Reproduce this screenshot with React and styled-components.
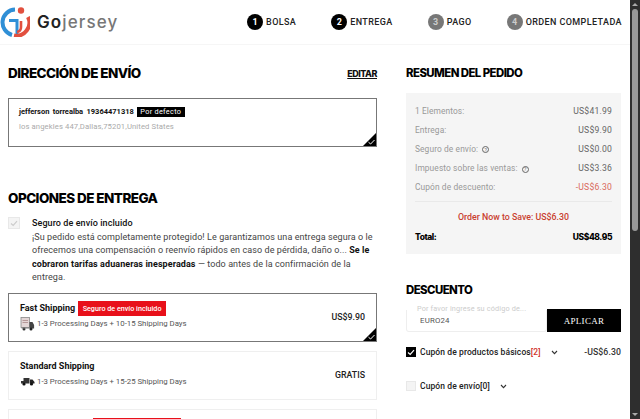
import React from "react";
import styled, { createGlobalStyle } from "styled-components";

const GlobalStyle = createGlobalStyle`
  html, body {
    margin: 0;
    padding: 0;
    height: 100%;
    overflow: hidden;
    background: #fff;
  }
  * { box-sizing: border-box; }
  body {
    font-family: "Roboto", "Liberation Sans", sans-serif;
    color: #111;
  }
`;

const Page = styled.div`
  display: flex;
  width: 640px;
  height: 419px;
  overflow: hidden;
`;

const Content = styled.div`
  flex: 1;
  min-width: 0;
  height: 419px;
  overflow: hidden;
`;

const ScrollTrack = styled.div`
  width: 10px;
  height: 419px;
  background: #2e2e2e;
  display: flex;
  flex-direction: column;
  align-items: center;
  justify-content: space-between;
  padding: 3px 0;
`;

const ScrollArrow = styled.div`
  width: 0;
  height: 0;
  border-left: 3px solid transparent;
  border-right: 3px solid transparent;
  ${({ $down }) => ($down ? "border-top: 3px solid #aaa;" : "border-bottom: 3px solid #aaa;")}
`;

const ScrollThumb = styled.div`
  width: 6px;
  height: 222px;
  margin-top: 3px;
  border-radius: 3px;
  background: #999;
`;

const ScrollTop = styled.div`
  display: flex;
  flex-direction: column;
  align-items: center;
`;

const Header = styled.header`
  height: 45px;
  display: flex;
  align-items: center;
  justify-content: space-between;
  padding-right: 8px;
  border-bottom: 1px solid #f6f6f6;
`;

const Logo = styled.div`
  display: flex;
  align-items: center;
  gap: 7px;
`;

const LogoText = styled.span`
  font-family: "Inter", sans-serif;
  font-size: 17px;
  font-weight: 500;
  letter-spacing: 1.1px;
  color: #777;
  b {
    font-weight: 600;
    color: #222;
  }
`;

const Steps = styled.div`
  display: flex;
  align-items: center;
  gap: 35px;
`;

const Step = styled.div`
  display: flex;
  align-items: center;
  gap: 3px;
  font-size: 9px;
  font-weight: 500;
  letter-spacing: 0.4px;
  color: #222;
`;

const StepDot = styled.span`
  width: 16px;
  height: 16px;
  border-radius: 50%;
  background: ${({ $off }) => ($off ? "#777" : "#000")};
  color: ${({ $off }) => ($off ? "#ccc" : "#fff")};
  display: flex;
  align-items: center;
  justify-content: center;
  font-size: 9px;
  font-weight: 700;
  letter-spacing: 0;
`;

const Columns = styled.div`
  display: flex;
  align-items: flex-start;
  gap: 29px;
  padding: 0 9px 0 8px;
`;

const LeftCol = styled.main`
  width: 369px;
  flex-shrink: 0;
`;

const RightCol = styled.aside`
  width: 215px;
  flex-shrink: 0;
`;

const HeadRow = styled.div`
  display: flex;
  align-items: center;
  justify-content: space-between;
  height: 18px;
  margin-top: ${({ $top }) => $top}px;
`;

const Heading = styled.h2`
  margin: 0;
  font-family: "Inter", sans-serif;
  font-size: ${({ $small }) => ($small ? 11.4 : 13.5)}px;
  font-weight: 800;
  letter-spacing: -0.55px;
  line-height: 18px;
  color: #000;
`;

const EditLink = styled.a`
  font-family: "Inter", sans-serif;
  font-size: 9px;
  font-weight: 800;
  letter-spacing: -0.5px;
  color: #111;
  text-decoration: underline;
`;

const Card = styled.div`
  position: relative;
  height: 49px;
  border: 1px solid ${({ $active }) => ($active ? "#777" : "#efefef")};
  overflow: hidden;
`;

const AddressCard = styled(Card)`
  margin-top: 16px;
  padding: 6px 10px;
`;

const Corner = styled.span`
  position: absolute;
  right: 0;
  bottom: 0;
  width: 0;
  height: 0;
  border-left: 13px solid transparent;
  border-bottom: 13px solid #000;
`;

const CornerCheck = styled.svg`
  position: absolute;
  right: 1px;
  bottom: 1px;
  width: 7px;
  height: 6px;
`;

const NameRow = styled.div`
  display: flex;
  align-items: center;
  gap: 3px;
  font-size: 7.5px;
  font-weight: 700;
  word-spacing: 1.5px;
  height: 13px;
`;

const DefaultTag = styled.span`
  background: #000;
  color: #fff;
  font-size: 7.3px;
  font-weight: 400;
  letter-spacing: 0.3px;
  padding: 0 3.5px;
  line-height: 10px;
  word-spacing: 0;
`;

const AddressLine = styled.div`
  margin-top: 4px;
  font-size: 7.7px;
  letter-spacing: 0.1px;
  color: #aaa;
`;

const Insurance = styled.div`
  display: flex;
  gap: 12px;
  margin-top: 10px;
`;

const Box = styled.span`
  flex-shrink: 0;
  width: ${({ $size }) => $size || 10}px;
  height: ${({ $size }) => $size || 10}px;
  display: flex;
  align-items: center;
  justify-content: center;
  border: 1px solid ${({ $on }) => ($on ? "#000" : "#e8e8e8")};
  background: ${({ $on }) => ($on ? "#000" : "#f4f4f4")};
`;

const InsuranceBody = styled.div`
  font-size: 9px;
  line-height: 13.5px;
  color: #444;
  letter-spacing: 0.08px;
  b {
    color: #111;
    font-weight: 700;
  }
`;

const InsuranceTitle = styled.div`
  color: #111;
  font-weight: 500;
`;

const ShipList = styled.div`
  display: flex;
  flex-direction: column;
  gap: 9px;
  margin-top: 8px;
`;

const ShipCard = styled(Card)`
  display: flex;
  align-items: center;
  justify-content: space-between;
  padding: 0 11px;
`;

const ShipMain = styled.div`
  align-self: flex-start;
  padding-top: 7px;
`;

const ShipTitle = styled.div`
  display: flex;
  align-items: center;
  gap: 3px;
  height: 14px;
  font-size: 9px;
  font-weight: 700;
  color: #111;
`;

const RedTag = styled.span`
  margin-top: 2px;
  background: #e8101a;
  color: #fff;
  font-size: 7.2px;
  font-weight: 500;
  line-height: 15px;
  padding: 0 4.5px;
`;

const BlankTag = styled.span`
  display: block;
  width: 88px;
  height: 14px;
  margin: 1px 0 0 73px;
  background: #e8101a;
`;

const ShipInfo = styled.div`
  display: flex;
  align-items: center;
  gap: 2px;
  height: 14px;
  margin-top: 2px;
  font-size: 7.8px;
  color: #555;
`;

const ShipPrice = styled.div`
  font-size: 8.8px;
  font-weight: 500;
  color: #222;
`;

const Summary = styled.div`
  margin-top: 11px;
  height: 161px;
  padding: 8px 9px 0 9px;
  background: #f5f5f5;
`;

const SummaryRow = styled.div`
  display: flex;
  align-items: center;
  justify-content: space-between;
  height: 19.2px;
  font-size: 8.4px;
  letter-spacing: 0.1px;
  color: #999;
`;

const RowValue = styled.span`
  font-size: 8.6px;
  letter-spacing: 0.2px;
  color: ${({ $red }) => ($red ? "#d9695c" : "#666")};
`;

const HelpIcon = styled.span`
  display: inline-flex;
  align-items: center;
  justify-content: center;
  width: 7px;
  height: 7px;
  margin-left: 4px;
  border: 1px solid #666;
  border-radius: 50%;
  font-size: 5px;
  color: #666;
`;

const Divider = styled.div`
  height: 1px;
  margin-top: 4px;
  background: #e9e9e9;
`;

const SaveNote = styled.div`
  margin-top: 10px;
  text-align: center;
  font-size: 8.8px;
  font-weight: 500;
  color: #c9402f;
`;

const TotalRow = styled.div`
  display: flex;
  justify-content: space-between;
  margin-top: 10px;
  font-family: "Inter", sans-serif;
  font-size: 8.5px;
  font-weight: 800;
  letter-spacing: -0.45px;
  color: #000;
`;

const CouponForm = styled.div`
  display: flex;
  margin-top: 10px;
`;

const CouponField = styled.div`
  position: relative;
  flex: 1;
  height: 22px;
  margin-top: 1px;
  padding: 0 13px;
  display: flex;
  align-items: center;
  font-size: 7.8px;
  letter-spacing: 0.2px;
  color: #555;
  border: 1px solid #eee;
  border-top: none;
  border-radius: 0 0 3px 3px;
`;

const CouponLegend = styled.span`
  position: absolute;
  top: -6px;
  left: 10px;
  font-size: 7.3px;
  letter-spacing: 0.15px;
  color: #ccc;
  white-space: nowrap;
`;

const ApplyButton = styled.button`
  width: 74px;
  height: 23px;
  border: none;
  padding: 0;
  background: #000;
  color: #fff;
  font-family: "Liberation Serif", serif;
  font-size: 9px;
  letter-spacing: 0.3px;
`;

const CouponRow = styled.div`
  display: flex;
  align-items: center;
  height: 14px;
  margin-top: ${({ $top }) => $top}px;
  font-size: 8.5px;
  font-weight: 500;
  letter-spacing: 0.1px;
  color: #222;
`;

const CouponLabel = styled.span`
  margin-left: 4px;
  em {
    font-style: normal;
    color: #d0332c;
  }
`;

const Chevron = styled.svg`
  width: 7px;
  height: 5px;
  margin-left: 10px;
`;

const CouponAmount = styled.span`
  margin-left: auto;
  font-size: 8.7px;
  color: #333;
`;

const Check = ({ color = "#fff" }) => (
  <svg width="8" height="7" viewBox="0 0 8 7">
    <path d="M1 3.5 L3.2 5.5 L7 1.2" fill="none" stroke={color} strokeWidth="1.2" />
  </svg>
);

const CornerMark = () => (
  <>
    <Corner />
    <CornerCheck viewBox="0 0 7 6">
      <path d="M0.5 3.2 L2.6 5 L6.5 1" fill="none" stroke="#fff" strokeWidth="1" />
    </CornerCheck>
  </>
);

const ChevronDown = () => (
  <Chevron viewBox="0 0 7 5">
    <path d="M1 1 L3.5 3.6 L6 1" fill="none" stroke="#333" strokeWidth="1.1" />
  </Chevron>
);

const TruckIcon = ({ boxed }) => (
  <svg width="15" height={boxed ? 14 : 9} viewBox={boxed ? "0 0 14 14" : "0 0 14 9"}>
    {boxed ? (
      <>
        <rect x="0.5" y="0.5" width="8.5" height="10" fill="#e3d6d6" stroke="#888" strokeWidth="0.8" />
        <path d="M2 3.5 H7.5 M2 5.5 H7.5" stroke="#a88" strokeWidth="0.8" />
        <path d="M9 5 H12 L13.6 8 V11.5 H9 Z" fill="#444" />
        <circle cx="3.5" cy="12" r="1.5" fill="#333" />
        <circle cx="10.5" cy="12" r="1.5" fill="#222" />
        <rect x="1" y="10.5" width="8" height="1" fill="#777" />
      </>
    ) : (
      <>
        <path d="M3 1 H9 V6.5 H0.5 V4 H3 Z" fill="#333" />
        <path d="M9.5 2.5 H12 L14 5 V6.5 H9.5 Z" fill="#222" />
        <circle cx="3.5" cy="7" r="1.6" fill="#111" />
        <circle cx="11" cy="7" r="1.6" fill="#111" />
      </>
    )}
  </svg>
);

const GoLogo = () => (
  <svg width="30" height="30" viewBox="0 0 30 30">
    <path d="M15 2.5 A 13 13 0 0 0 12 28" fill="none" stroke="#2f8fd6" strokeWidth="4" />
    <path d="M9 13.5 H17 V28" fill="none" stroke="#2f8fd6" strokeWidth="3" />
    <path d="M28 10 A 13 13 0 0 1 14 28.5" fill="none" stroke="#e2503f" strokeWidth="4" />
    <path d="M21 14 V20 A 5 5 0 0 1 17 25" fill="none" stroke="#e2503f" strokeWidth="2.6" />
    <circle cx="21" cy="3.5" r="3.2" fill="#e2503f" />
  </svg>
);

const steps = [
  { n: 1, label: "BOLSA" },
  { n: 2, label: "ENTREGA" },
  { n: 3, label: "PAGO", off: true },
  { n: 4, label: "ORDEN COMPLETADA", off: true },
];

const summary = [
  { label: "1 Elementos:", value: "US$41.99" },
  { label: "Entrega:", value: "US$9.90" },
  { label: "Seguro de envío:", value: "US$0.00", help: true },
  { label: "Impuesto sobre las ventas:", value: "US$3.36", help: true },
  { label: "Cupón de descuento:", value: "-US$6.30", red: true },
];

export default function App() {
  return (
    <Page>
      <GlobalStyle />
      <Content>
        <Header>
          <Logo>
            <GoLogo />
            <LogoText>
              <b>Go</b>jersey
            </LogoText>
          </Logo>
          <Steps>
            {steps.map((s) => (
              <Step key={s.n}>
                <StepDot $off={s.off}>{s.n}</StepDot>
                {s.label}
              </Step>
            ))}
          </Steps>
        </Header>
        <Columns>
          <LeftCol>
            <HeadRow $top={19}>
              <Heading>DIRECCIÓN DE ENVÍO</Heading>
              <EditLink>EDITAR</EditLink>
            </HeadRow>
            <AddressCard $active>
              <NameRow>
                jefferson torrealba 19364471318
                <DefaultTag>Por defecto</DefaultTag>
              </NameRow>
              <AddressLine>los angekles 447,Dallas,75201,United States</AddressLine>
              <CornerMark />
            </AddressCard>
            <HeadRow $top={42}>
              <Heading>OPCIONES DE ENTREGA</Heading>
            </HeadRow>
            <Insurance>
              <Box $size={12}>
                <Check color="#ccc" />
              </Box>
              <InsuranceBody>
                <InsuranceTitle>Seguro de envío incluido</InsuranceTitle>
                ¡Su pedido está completamente protegido! Le garantizamos una entrega segura o le
                ofrecemos una compensación o reenvío rápidos en caso de pérdida, daño o...{" "}
                <b>Se le cobraron tarifas aduaneras inesperadas</b> — todo antes de la confirmación
                de la entrega.
              </InsuranceBody>
            </Insurance>
            <ShipList>
              <ShipCard $active>
                <ShipMain>
                  <ShipTitle>
                    Fast Shipping <RedTag>Seguro de envío incluido</RedTag>
                  </ShipTitle>
                  <ShipInfo>
                    <TruckIcon boxed />
                    1-3 Processing Days + 10-15 Shipping Days
                  </ShipInfo>
                </ShipMain>
                <ShipPrice>US$9.90</ShipPrice>
                <CornerMark />
              </ShipCard>
              <ShipCard>
                <ShipMain>
                  <ShipTitle>Standard Shipping</ShipTitle>
                  <ShipInfo>
                    <TruckIcon />
                    1-3 Processing Days + 15-25 Shipping Days
                  </ShipInfo>
                </ShipMain>
                <ShipPrice>GRATIS</ShipPrice>
              </ShipCard>
              <ShipCard>
                <ShipMain>
                  <BlankTag />
                </ShipMain>
              </ShipCard>
            </ShipList>
          </LeftCol>
          <RightCol>
            <HeadRow $top={19}>
              <Heading $small>RESUMEN DEL PEDIDO</Heading>
            </HeadRow>
            <Summary>
              {summary.map((row) => (
                <SummaryRow key={row.label}>
                  <span>
                    {row.label}
                    {row.help && <HelpIcon>?</HelpIcon>}
                  </span>
                  <RowValue $red={row.red}>{row.value}</RowValue>
                </SummaryRow>
              ))}
              <Divider />
              <SaveNote>Order Now to Save: US$6.30</SaveNote>
              <TotalRow>
                <span>Total:</span>
                <span>US$48.95</span>
              </TotalRow>
            </Summary>
            <HeadRow $top={27}>
              <Heading $small>DESCUENTO</Heading>
            </HeadRow>
            <CouponForm>
              <CouponField>
                <CouponLegend>Por favor ingrese su código de...</CouponLegend>
                EURO24
              </CouponField>
              <ApplyButton>APLICAR</ApplyButton>
            </CouponForm>
            <CouponRow $top={13}>
              <Box $on>
                <Check />
              </Box>
              <CouponLabel>
                Cupón de productos básicos<em>[2]</em>
              </CouponLabel>
              <ChevronDown />
              <CouponAmount>-US$6.30</CouponAmount>
            </CouponRow>
            <CouponRow $top={20}>
              <Box />
              <CouponLabel>Cupón de envío[0]</CouponLabel>
              <ChevronDown />
            </CouponRow>
          </RightCol>
        </Columns>
      </Content>
      <ScrollTrack>
        <ScrollTop>
          <ScrollArrow />
          <ScrollThumb />
        </ScrollTop>
        <ScrollArrow $down />
      </ScrollTrack>
    </Page>
  );
}
